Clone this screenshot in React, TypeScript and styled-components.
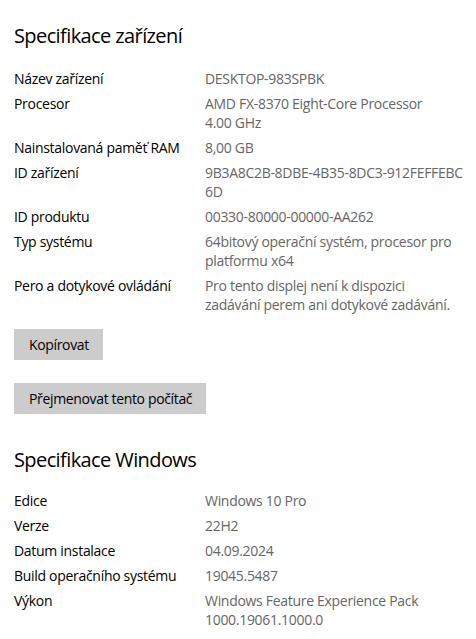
import React from "react";
import styled, { createGlobalStyle } from "styled-components";

const Global = createGlobalStyle`
  html, body { margin: 0; padding: 0; background: #ffffff; }
  body { font-family: "Open Sans", "Noto Sans", sans-serif; color: #000; }
`;

const Page = styled.div`
  padding: 22px 14px 0 14px;
  display: flex;
  flex-direction: column;
`;

const Heading = styled.h2<{ $top?: number }>`
  margin: ${(p) => p.$top ?? 0}px 0 0 0;
  font-size: 20px;
  font-weight: 400;
  line-height: 28px;
  letter-spacing: -0.6px;
  color: #000;
`;

const SpecList = styled.dl<{ $top: number }>`
  margin: ${(p) => p.$top}px 0 0 0;
  display: grid;
  grid-template-columns: 191px 252px;
  row-gap: 6px;
`;

const Label = styled.dt`
  margin: 0;
  font-size: 14px;
  line-height: 19px;
  letter-spacing: -0.3px;
  color: #000;
`;

const Value = styled.dd`
  margin: 0;
  font-size: 14px;
  line-height: 19px;
  letter-spacing: -0.3px;
  color: #666666;
  white-space: nowrap;
`;

const Line = styled.span`
  display: block;
`;

const Button = styled.button<{ $top: number }>`
  align-self: flex-start;
  margin-top: ${(p) => p.$top}px;
  height: 31px;
  padding: 0 14px 0 15px;
  border: none;
  border-radius: 0;
  background: #cccccc;
  color: #000;
  font-family: "Open Sans", "Noto Sans", sans-serif;
  font-size: 14px;
  letter-spacing: -0.35px;
  line-height: 19px;
`;

type Spec = { label: string; lines: string[] };

const device: Spec[] = [
  { label: "Název zařízení", lines: ["DESKTOP-983SPBK"] },
  { label: "Procesor", lines: ["AMD FX-8370 Eight-Core Processor", "4.00 GHz"] },
  { label: "Nainstalovaná paměť RAM", lines: ["8,00 GB"] },
  { label: "ID zařízení", lines: ["9B3A8C2B-8DBE-4B35-8DC3-912FEFFEBC", "6D"] },
  { label: "ID produktu", lines: ["00330-80000-00000-AA262"] },
  { label: "Typ systému", lines: ["64bitový operační systém, procesor pro", "platformu x64"] },
  {
    label: "Pero a dotykové ovládání",
    lines: ["Pro tento displej není k dispozici", "zadávání perem ani dotykové zadávání."],
  },
];

const windows: Spec[] = [
  { label: "Edice", lines: ["Windows 10 Pro"] },
  { label: "Verze", lines: ["22H2"] },
  { label: "Datum instalace", lines: ["04.09.2024"] },
  { label: "Build operačního systému", lines: ["19045.5487"] },
  { label: "Výkon", lines: ["Windows Feature Experience Pack", "1000.19061.1000.0"] },
];

function Specs({ items, top }: { items: Spec[]; top: number }) {
  return (
    <SpecList $top={top}>
      {items.map((s) => (
        <React.Fragment key={s.label}>
          <Label>{s.label}</Label>
          <Value>
            {s.lines.map((l) => (
              <Line key={l}>{l}</Line>
            ))}
          </Value>
        </React.Fragment>
      ))}
    </SpecList>
  );
}

export default function App() {
  return (
    <>
      <Global />
      <Page>
        <Heading>Specifikace zařízení</Heading>
        <Specs items={device} top={19} />
        <Button $top={15}>Kopírovat</Button>
        <Button $top={23}>Přejmenovat tento počítač</Button>
        <Heading $top={32}>Specifikace Windows</Heading>
        <Specs items={windows} top={17} />
      </Page>
    </>
  );
}
